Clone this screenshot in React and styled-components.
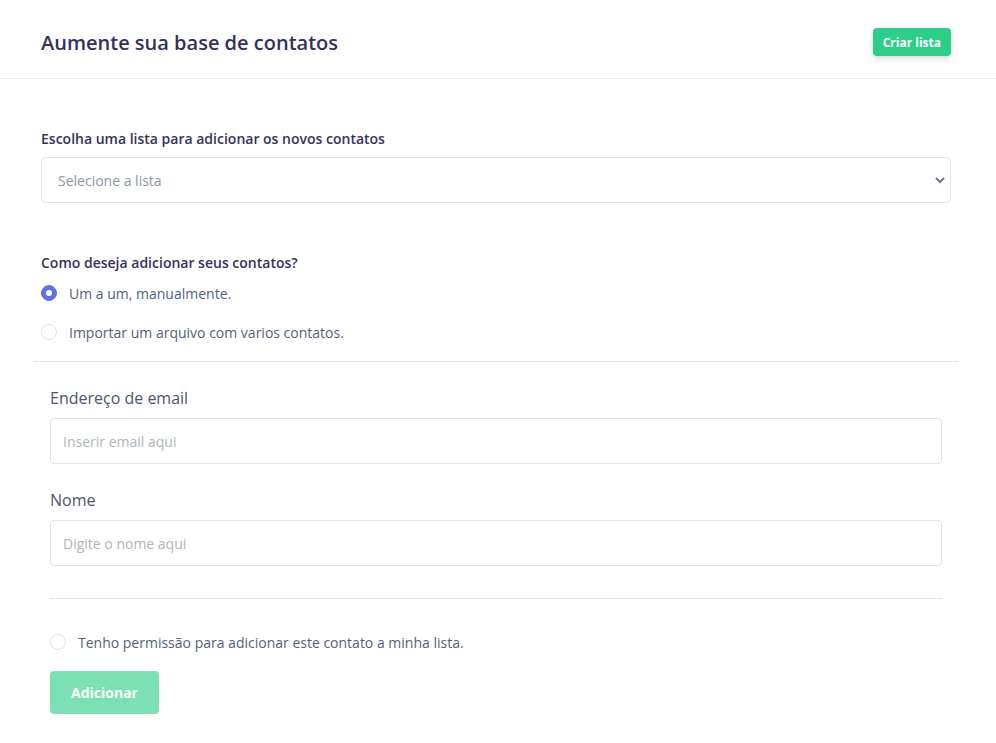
import React from "react";
import styled, { createGlobalStyle } from "styled-components";

const GlobalStyle = createGlobalStyle`
  body {
    margin: 0;
    background: #fff;
    font-family: "Open Sans", "Liberation Sans", sans-serif;
    color: #525f7f;
  }
  * { box-sizing: border-box; }
`;

const Header = styled.header`
  height: 79px;
  display: flex;
  align-items: center;
  justify-content: space-between;
  padding: 6px 45px 0 41px;
  border-bottom: 1px solid #edeef1;
`;

const Title = styled.h1`
  margin: 0;
  font-size: 20px;
  font-weight: 600;
  color: #32325d;
`;

const SmallButton = styled.button`
  height: 28px;
  padding: 0 10px;
  border: none;
  border-radius: 4px;
  background: #2dce89;
  color: #fff;
  font-family: inherit;
  font-size: 12px;
  font-weight: 700;
  box-shadow: 0 4px 6px rgba(50, 50, 93, 0.11), 0 1px 3px rgba(0, 0, 0, 0.08);
  cursor: pointer;
`;

const Container = styled.main`
  margin: 0 38px 0 34px;
`;

const Block = styled.section`
  padding: ${(p) => p.padding};
`;

const Label = styled.div`
  font-size: ${(p) => (p.large ? "16px" : "14px")};
  font-weight: ${(p) => (p.large ? 400 : 600)};
  line-height: ${(p) => (p.large ? "24px" : "21px")};
  color: ${(p) => (p.large ? "#4a5573" : "#32325d")};
  margin-top: ${(p) => p.top || "0"};
  margin-bottom: 8px;
`;

const SelectWrap = styled.div`
  position: relative;
`;

const Select = styled.select`
  width: 100%;
  height: 46px;
  padding: 0 40px 0 16px;
  border: 1px solid #dfe3e8;
  border-radius: 4px;
  background: #fff;
  color: #8898aa;
  font-family: inherit;
  font-size: 14px;
  appearance: none;
  outline: none;
`;

const Chevron = styled.svg`
  position: absolute;
  right: 6px;
  top: 19px;
  pointer-events: none;
`;

const Input = styled.input`
  width: 100%;
  height: 46px;
  padding: 0 12px;
  border: 1px solid #dfe3e8;
  border-radius: 4px;
  font-family: inherit;
  font-size: 14px;
  color: #525f7f;
  outline: none;
  &::placeholder { color: #adb5bd; }
`;

const RadioRow = styled.label`
  display: flex;
  align-items: center;
  gap: 12px;
  height: 24px;
  margin-bottom: ${(p) => p.gap || "0"};
  font-size: 14px;
  color: #525f7f;
  cursor: pointer;
`;

const Dot = styled.span`
  width: 16px;
  height: 16px;
  border-radius: 50%;
  flex-shrink: 0;
  background: ${(p) => (p.checked ? "#5e72e4" : "#fff")};
  border: 1px solid ${(p) => (p.checked ? "#5e72e4" : "#dee2e6")};
  display: flex;
  align-items: center;
  justify-content: center;
  &::after {
    content: "";
    display: ${(p) => (p.checked ? "block" : "none")};
    width: 6px;
    height: 6px;
    border-radius: 50%;
    background: #fff;
  }
`;

const Divider = styled.hr`
  margin: ${(p) => p.margin};
  border: none;
  border-top: 1px solid #e6e8eb;
`;

const SubmitButton = styled.button`
  height: 43px;
  padding: 0 21px;
  border: none;
  border-radius: 4px;
  background: #2dce89;
  opacity: 0.62;
  color: #fff;
  font-family: inherit;
  font-size: 14px;
  font-weight: 700;
  margin-top: 17px;
`;

export default function App() {
  const [mode, setMode] = React.useState("manual");
  return (
    <>
      <GlobalStyle />
      <Header>
        <Title>Aumente sua base de contatos</Title>
        <SmallButton>Criar lista</SmallButton>
      </Header>
      <Container>
        <Block padding="0 7px 17px">
          <Label top="49px">Escolha uma lista para adicionar os novos contatos</Label>
          <SelectWrap>
            <Select defaultValue="">
              <option value="" disabled>Selecione a lista</option>
            </Select>
            <Chevron width="10" height="8" viewBox="0 0 10 8">
              <path d="M1 2l4 4 4-4" fill="none" stroke="#6b7a90" strokeWidth="2" />
            </Chevron>
          </SelectWrap>

          <Label top="49px">Como deseja adicionar seus contatos?</Label>
          <RadioRow gap="15px" onClick={() => setMode("manual")}>
            <Dot checked={mode === "manual"} />
            Um a um, manualmente.
          </RadioRow>
          <RadioRow onClick={() => setMode("file")}>
            <Dot checked={mode === "file"} />
            Importar um arquivo com varios contatos.
          </RadioRow>
        </Block>
        <Divider margin="0" />
        <Block padding="24px 16px 0">
          <Label large>Endereço de email</Label>
          <Input placeholder="Inserir email aqui" />
          <Label large top="24px">Nome</Label>
          <Input placeholder="Digite o nome aqui" />
          <Divider margin="32px 0 31px" />
          <RadioRow>
            <Dot />
            Tenho permissão para adicionar este contato a minha lista.
          </RadioRow>
          <SubmitButton>Adicionar</SubmitButton>
        </Block>
      </Container>
    </>
  );
}
